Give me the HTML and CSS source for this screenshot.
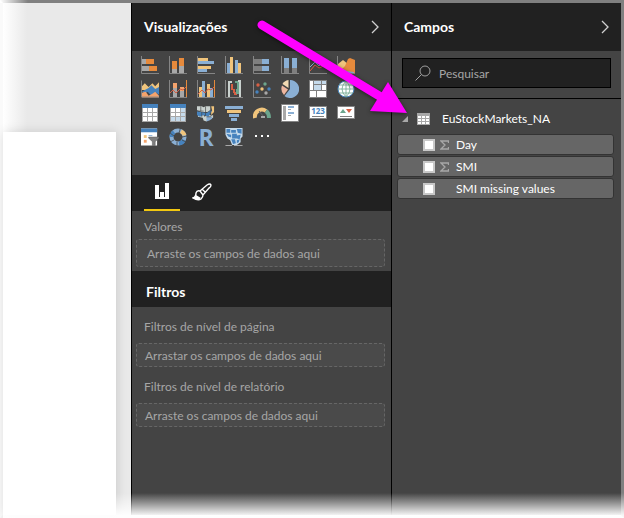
FILE: index.html
```html
<!DOCTYPE html>
<html lang="pt">
<head>
<meta charset="utf-8">
<meta name="viewport" content="width=device-width, initial-scale=1">
<title>Visualizações e Campos</title>
<link rel="stylesheet" href="styles.css">
</head>
<body>
<div class="app">
  <main class="canvas"><div class="sheet"></div></main>

  <section class="panel visuals" aria-labelledby="visuals-title">
    <header class="panel-head">
      <h2 id="visuals-title">Visualizações</h2>
      <button class="chevron" type="button" aria-label="Recolher visualizações"><svg width="8" height="14" viewBox="0 0 8 14"><path d="M1 1l6 6-6 6"/></svg></button>
    </header>

    <div class="gallery">
      <button type="button" aria-label="Barras empilhadas"><svg viewBox="0 0 18 18"><path class="axis" d="M.5 0v17.5H18"/><path class="grey" d="M1 3h4v5H1zM1 10h7v5H1z"/><path class="orange" d="M5 3h8v5H5zM8 10h8v5H8z"/></svg></button>
      <button type="button" aria-label="Colunas empilhadas"><svg viewBox="0 0 18 18"><path class="axis" d="M.5 0v17.5H18"/><path class="orange" d="M3 5h5v8H3zM10 2h5v8h-5z"/><path class="grey" d="M3 13h5v4H3zM10 10h5v7h-5z"/></svg></button>
      <button type="button" aria-label="Barras agrupadas"><svg viewBox="0 0 18 18"><path class="axis" d="M.5 0v17.5H18"/><path class="yellow" d="M1 2h10v3H1zM1 10h13v3H1z"/><path class="blue" d="M1 5h16v3H1zM1 13h9v3H1z"/></svg></button>
      <button type="button" aria-label="Colunas agrupadas"><svg viewBox="0 0 18 18"><path class="axis" d="M.5 0v17.5H18"/><path class="blue" d="M2 7h3v10H2zM10 4h3v13h-3z"/><path class="yellow" d="M5 1h3v16H5zM13 7h3v10h-3z"/></svg></button>
      <button type="button" aria-label="Barras 100% empilhadas"><svg viewBox="0 0 18 18"><path class="axis" d="M.5 0v17.5H18"/><path class="dim" d="M1 3h8v5H1zM1 10h8v5H1z"/><path class="blue" d="M9 3h7v5H9zM9 10h7v5H9z"/></svg></button>
      <button type="button" aria-label="Colunas 100% empilhadas"><svg viewBox="0 0 18 18"><path class="axis" d="M.5 0v17.5H18"/><path class="blue" d="M3 2h5v10H3zM11 2h5v10h-5z"/><path class="dim" d="M3 12h5v5H3zM11 12h5v5h-5z"/></svg></button>
      <button type="button" aria-label="Linhas"><svg viewBox="0 0 18 18"><path class="axis" d="M.5 0v17.5H18"/><path class="line-blue" d="M1 11l5-5 4 4 7-7"/><path class="line-red" d="M1 15l5-6 4 3 7-3"/></svg></button>
      <button type="button" aria-label="Área"><svg viewBox="0 0 18 18"><path class="yellow" d="M1 8l5-4 5 4 3 3v6H1z"/><path class="orange" d="M4 14l4-4 3-7 2-1 5 2v13H4z"/><path class="blue" d="M1 15l5-2 4 2 7 1v2H1z"/><path class="axis" d="M.5 0v17.5H18"/></svg></button>

      <button type="button" aria-label="Área empilhada"><svg viewBox="0 0 19 18"><path class="yellow" d="M1 6l3-3 4 4 4-4 3 3 4-4v8H1z"/><path class="deep" d="M1 12l3-2 4-2 3-3 4 4 4-2v8l-3-2-5 3-4-4-3 2-3-2z"/><path class="salmon" d="M1 13l4-1 3 4 4-2 3-2 4 4v2H1z"/><path class="axis" d="M.5 0v17.5H19"/></svg></button>
      <button type="button" aria-label="Linhas e colunas empilhadas"><svg viewBox="0 0 18 18"><path class="axis" d="M.5 0v17.5H18"/><path class="salmon" d="M4 3h4v5H4zM11 7h4v5h-4z"/><path class="grey" d="M4 8h4v9H4zM11 11h4v6h-4z"/><path class="line-orange" d="M17.5 0v17"/><path class="line-red" d="M1 13l3-3 3 3 4-4 3 1 3-3"/></svg></button>
      <button type="button" aria-label="Linhas e colunas agrupadas"><svg viewBox="0 0 18 18"><path class="axis" d="M.5 0v17.5H18"/><path class="yellow" d="M2 7h3v10H2zM10 4h3v13h-3z"/><path class="blue" d="M5 1h3v16H5zM13 8h3v9h-3z"/><path class="line-orange" d="M17.5 0v17"/><path class="line-red" d="M1 14l4-4 3 3 3-4 3 1 3-3"/></svg></button>
      <button type="button" aria-label="Cascata"><svg viewBox="0 0 18 18"><path class="axis" d="M.5 0v17.5H18"/><path class="pale" d="M3 1h4v2H5v14H3z"/><path class="red" d="M6 4h2v5h2v4H8v-3H6zM9 12h3v3H9z"/><path class="green" d="M10 1h4v13h-3V9h1V3h-2z"/><path class="pale" d="M13 0h3v17h-2V2h-1z"/></svg></button>
      <button type="button" aria-label="Dispersão"><svg viewBox="0 0 18 18"><path class="axis" d="M.5 0v17.5H18"/><circle class="red" cx="5" cy="5" r="1.7"/><circle class="green" cx="12" cy="4" r="1.7"/><circle class="yellow" cx="9" cy="9" r="1.7"/><circle class="deep" cx="4" cy="12" r="1.7"/><circle class="deep" cx="16" cy="9" r="1.7"/><circle class="grey" cx="13" cy="13" r="1.7"/></svg></button>
      <button type="button" aria-label="Pizza"><svg viewBox="0 0 18 18"><path class="blue" d="M9 0a9 9 0 1 1-5.5 16L9 9z"/><path class="cream" d="M7.5 0v8L1.5 4Q3 .8 7.5 0z"/><path class="pink" d="M1 5.500l6 4-4 5.500Q-1 11 1 5.500z"/></svg></button>
      <button type="button" aria-label="Mapa de árvore"><svg viewBox="0 0 18 18"><path class="dim" d="M0 0h18v18H0z"/><path class="white" d="M1 1h3v9H1zM1 11h6v6H1zM8 11h9v6H8zM13 5h4v5h-4z"/><path class="ice" d="M5 1h7v3H5zM5 5h7v5H5zM13 1h4v3h-4z"/></svg></button>
      <button type="button" aria-label="Mapa"><svg viewBox="0 0 18 18"><circle class="globe" cx="9" cy="9" r="8"/><path class="globe-lines" d="M1 9h16M2 5h14M2 13h14M9 1v16M9 1q-8 8 0 16M9 1q8 8 0 16"/></svg></button>

      <button type="button" aria-label="Tabela"><svg viewBox="0 0 18 18"><path class="grey" d="M1 0h16v18H1z"/><path class="deep" d="M1 0h16v4H1z"/><path class="white" d="M2 4h4v4H2zM7 4h4v4H7zM12 4h4v4h-4zM2 9h4v3H2zM7 9h4v3H7zM12 9h4v3h-4zM2 13h4v4H2zM7 13h4v4H7zM12 13h4v4h-4z"/></svg></button>
      <button type="button" aria-label="Matriz"><svg viewBox="0 0 18 18"><path class="grey" d="M1 0h16v18H1z"/><path class="deep" d="M1 0h16v4H1z"/><path class="white" d="M2 4h4v4H2zM7 4h4v4H7zM2 9h4v3H2zM7 9h4v3H7z"/><path class="ice" d="M12 4h4v4h-4zM12 9h4v3h-4zM2 13h4v4H2zM7 13h4v4H7zM12 13h4v4h-4z"/></svg></button>
      <button type="button" aria-label="Mapa preenchido"><svg viewBox="0 0 19 18"><path class="pale" d="M0 2h5l2 1 2-1h5v4l-3 2H5L0 6zM1 11l5-1 2 3 4-3 3 2 2-1v3l-5 1-2 3-3-1-1-3-5-1z"/><path class="deep" d="M0 7l4 1 6 1 2-1 2-2 2 1-4 6-5-2-4 2-3-2z"/><path class="yellow" d="M15 2h3v6l-3 3V8l1-1z"/><path class="blue" d="M10 13h6v2l-3 2-3 1z"/><path class="map-lines" d="M4 2v5M9 2v10M5 8v5M0 7h7M10 13h5M14 6v5"/></svg></button>
      <button type="button" aria-label="Funil"><svg viewBox="0 0 18 18"><path class="blue" d="M0 2h18v3H0zM4 10h10v3H4zM6 14h6v3H6z"/><path class="yellow" d="M2 6h14v3H2z"/></svg></button>
      <button type="button" aria-label="Medidor"><svg viewBox="0 0 18 18"><path class="gauge-warm" d="M2 14a7 7 0 0 1 11-7"/><path class="gauge-green" d="M13 7q3 2 3 7"/><path class="gauge-needle" d="M6 7l5 6"/><path class="grey" d="M8 12h4v2H8z"/></svg></button>
      <button type="button" aria-label="Cartão de várias linhas"><svg viewBox="0 0 18 18"><path class="doc" d="M.5.500h17v17H.5z"/><path class="grey" d="M2 2h3v14H2zM7 5h3v1H7zM7 11h3v1H7z"/><path class="blue" d="M7 2h6v2H7zM7 8h6v2H7z"/></svg></button>
      <button type="button" aria-label="Cartão"><svg viewBox="0 0 18 18"><path class="doc" d="M.5 2.500h17v12H.5z"/><text class="card-number" x="9" y="10" text-anchor="middle">123</text><path class="dim" d="M3 12h12v1H3z"/></svg></button>
      <button type="button" aria-label="KPI"><svg viewBox="0 0 18 18"><path class="doc" d="M.5 2.500h17v12H.5z"/><path class="green" d="M3 9l3-4 3 4z"/><path class="red" d="M9 5h6l-3 4z"/><path class="dim" d="M3 12h12v1H3z"/></svg></button>

      <button type="button" aria-label="Segmentação de dados"><svg viewBox="0 0 19 18"><path class="white" d="M0 0h17v18H0z"/><path class="deep" d="M0 0h17v4H0z"/><path class="yellow" d="M3 7h3v3H3z"/><path class="salmon" d="M3 12h3v3H3z"/><path class="blue" d="M8 7h4v1H8z"/><path class="funnel" d="M8 9h11v1l-4 4v4h-3v-4l-4-4z"/></svg></button>
      <button type="button" aria-label="Rosca"><svg viewBox="0 0 18 18"><circle class="ring" cx="9" cy="9" r="6.500"/><path class="ring-dark" d="M15 12a6.500 6.500 0 0 1-5 3.500M2.500 9A6.500 6.500 0 0 1 5 4"/><path class="ring-yellow" d="M12 3.300q3 1.700 3.500 4"/><path class="ring-gap" d="M11.500 0L10 5M18 8l-5 1M17 14l-4-2M8 18v-4M1 14l4-2M1 5l4 3"/></svg></button>
      <button type="button" aria-label="Visual do script R"><span class="script-r">R</span></button>
      <button type="button" aria-label="Mapa de formas"><svg viewBox="0 0 18 19"><path class="ice" d="M0 0h18v9l-2 2v4l-4 3H7l-2-5-3-2-2-4z"/><path class="deep" d="M1 1h4v4H1zM6 2h5v3H6zM12 1h5v5l-4-1zM1 6l5 1v3L3 9zM7 6h5v5H7zM12 8l4-1-1 5-3-1zM6 12h4l1 4-3 1zM12 13l3-1-1 3-2 1z"/><path class="grey" d="M0 18h7v1H0zM9 18h9v1H9z"/></svg></button>
      <button type="button" aria-label="Mais opções"><svg viewBox="0 0 18 18"><path class="white" d="M2 7h2v2H2zM8 7h2v2H8zM14 7h2v2h-2z"/></svg></button>
    </div>

    <nav class="tabs">
      <button class="tab active" type="button" aria-label="Campos"><svg width="16" height="18" viewBox="0 0 16 18"><path class="white" d="M1 2h4v10h1V9h4v3h1V0h4v16H1z"/><path class="tab-cut" d="M5 0h1v14H5zM10 0h1v14h-1z"/></svg></button>
      <button class="tab" type="button" aria-label="Formato"><svg width="20" height="18" viewBox="0 0 20 18"><path class="brush" d="M8 8l7-6q3-2 4 0 0 2-2 3l-6 7zM8 8l3 4M10 6l3 3M8 8q-3-1-4 2 0 4-3 5 5 3 8 1 2-2 2-4"/><path class="white" d="M1 15q3-1 3-3l5 3q-3 3-8 0z"/></svg></button>
    </nav>

    <div class="well values">
      <h3>Valores</h3>
      <div class="drop">Arraste os campos de dados aqui</div>
    </div>

    <h2 class="filters-title">Filtros</h2>
    <div class="well filter">
      <h3>Filtros de nível de página</h3>
      <div class="drop">Arrastar os campos de dados aqui</div>
    </div>
    <div class="well filter">
      <h3>Filtros de nível de relatório</h3>
      <div class="drop">Arraste os campos de dados aqui</div>
    </div>
  </section>

  <section class="panel fields" aria-labelledby="fields-title">
    <header class="panel-head">
      <h2 id="fields-title">Campos</h2>
      <button class="chevron" type="button" aria-label="Recolher campos"><svg width="8" height="14" viewBox="0 0 8 14"><path d="M1 1l6 6-6 6"/></svg></button>
    </header>
    <div class="search-area">
      <label class="search">
        <svg width="16" height="16" viewBox="0 0 16 16"><circle cx="10" cy="6" r="5"/><path d="M6.500 9.500L.5 15.500"/></svg>
        <input type="search" placeholder="Pesquisar" aria-label="Pesquisar">
      </label>
    </div>
    <button class="table-row" type="button" aria-expanded="true">
      <svg width="6" height="6" viewBox="0 0 6 6"><path class="grey" d="M6 0v6H0z"/></svg>
      <svg class="table-icon" width="13" height="12" viewBox="0 0 13 12"><path class="grey" d="M0 0h13v12H0z"/><path class="cells" d="M1 3h3v2H1zM5 3h3v2H5zM9 3h3v2H9zM1 6h3v2H1zM5 6h3v2H5zM9 6h3v2H9zM1 9h3v2H1zM5 9h3v2H5zM9 9h3v2H9z"/></svg>
      <span>EuStockMarkets_NA</span>
    </button>
    <div class="field-list">
      <label class="field"><input type="checkbox"><svg class="sigma" viewBox="0 0 9 10"><path d="M8.500 3V1H1l4 4-4 4h7.500V7"/></svg><span>Day</span></label>
      <label class="field"><input type="checkbox"><svg class="sigma" viewBox="0 0 9 10"><path d="M8.500 3V1H1l4 4-4 4h7.500V7"/></svg><span>SMI</span></label>
      <label class="field"><input type="checkbox"><span class="sigma"></span><span>SMI missing values</span></label>
    </div>
  </section>

  <svg class="arrow" width="160" height="106" viewBox="0 0 160 106" aria-hidden="true"><path class="arrow-line" d="M11 10l119 72"/><path class="arrow-head" d="M156 98l-37-2 18-29z"/></svg>
</div>
</body>
</html>
```
FILE: styles.css
```css
* { box-sizing: border-box; }

body {
  margin: 0;
  background: #fff;
  color: #fff;
  font-family: Lato, "Open Sans", sans-serif;
  font-size: 12px;
  line-height: 16px;
}

h2, h3 { margin: 0; }

button {
  margin: 0;
  padding: 0;
  border: 0;
  background: none;
  color: inherit;
  font: inherit;
}

svg { display: block; fill: none; }

.app {
  position: relative;
  display: flex;
  min-height: 100vh;
  border: 3px solid #808080;
  border-left-color: #fafafa;
  border-bottom-color: #f3f3f3;
}

.app::before {
  content: "";
  position: absolute;
  top: -3px;
  left: -3px;
  width: 28px;
  height: 3px;
  background: linear-gradient(90deg, #fff, #fff0);
}

.app::after {
  content: "";
  position: absolute;
  right: -3px;
  bottom: -3px;
  left: 0;
  height: 25px;
  background: linear-gradient(#fff0, #fffe 22px);
  pointer-events: none;
}

.canvas {
  flex: 1;
  display: flex;
  padding: 129px 15px 0 0;
  background: linear-gradient(90deg, #fff, #e9e9e9 24px);
}

.sheet {
  flex: 1;
  background: #fff;
  box-shadow: 1px 0 10px #0002;
}

.panel {
  min-width: 0;
  border-left: 1px solid #000;
  background: #444;
}

.visuals { flex: 0 0 260px; }
.fields { flex: 0 0 230px; }

.panel-head {
  display: flex;
  align-items: center;
  justify-content: space-between;
  height: 48px;
  padding: 0 12px;
  background: #212121;
}

.panel-head h2, .filters-title {
  font-size: 14px;
  line-height: 20px;
  font-weight: 700;
}

.chevron path { stroke: #d0d0d0; stroke-width: 1.3; }

.gallery {
  display: grid;
  grid-template-columns: repeat(8, 18px);
  grid-auto-rows: 18px;
  gap: 6px 10px;
  height: 124px;
  padding: 5px 9px;
}

.gallery svg { width: 18px; height: 18px; }

.axis { stroke: #858585; }
.grey { fill: #a8a8a8; }
.dim { fill: #7f7f7f; }
.orange { fill: #e68a3c; }
.yellow { fill: #f0c47c; }
.blue { fill: #8aafd4; }
.deep { fill: #4682bd; }
.salmon { fill: #f4a36c; }
.red { fill: #d65f43; }
.green { fill: #6ca58d; }
.cream { fill: #f2dab3; }
.pink { fill: #eeb69f; }
.ice { fill: #c5daeb; }
.pale { fill: #c9d1ce; }
.white { fill: #fff; }
.line-blue { stroke: #8aafd4; }
.line-red { stroke: #d65f43; }
.line-orange { stroke: #e68a3c; }
.doc { fill: #fff; stroke: #858585; }
.globe { fill: #fff; stroke: #4682bd; }
.globe-lines { stroke: #6ca58d; stroke-width: .8; }
.map-lines { stroke: #444; stroke-width: .7; }
.gauge-warm { stroke: #f0c47c; stroke-width: 4; }
.gauge-green { stroke: #6ca58d; stroke-width: 4; }
.gauge-needle { stroke: #666; }
.funnel { fill: #7f7f7f; stroke: #555; stroke-width: .5; }
.ring { stroke: #8aafd4; stroke-width: 4; }
.ring-dark { stroke: #4682bd; stroke-width: 4; }
.ring-yellow { stroke: #f0c47c; stroke-width: 4; }
.ring-gap { stroke: #444; stroke-width: .8; }

.card-number {
  fill: #4682bd;
  font-family: "Open Sans", sans-serif;
  font-size: 8px;
  font-weight: 700;
}

.script-r {
  display: block;
  color: #8aafd4;
  font-family: "Open Sans", sans-serif;
  font-size: 23px;
  line-height: 18px;
  font-weight: 700;
}

.tabs {
  display: flex;
  gap: 4px;
  height: 36px;
  padding: 0 12px;
  background: #212121;
}

.tab {
  display: grid;
  place-items: center;
  width: 36px;
  border-bottom: 2px solid transparent;
}

.tab.active { border-color: #f2c811; }
.tab-cut { fill: #212121; }
.brush { stroke: #fff; stroke-width: 1.4; }

.well { padding: 8px 6px 0 4px; }
.well h3 {
  padding: 0 8px;
  color: #a6a6a6;
  font-size: 12px;
  line-height: 16px;
  font-weight: 400;
}

.drop {
  display: flex;
  align-items: center;
  height: 24px;
  margin-top: 8px;
  padding: 2px 8px 0;
  border: 1px dashed #666;
  border-radius: 3px;
  background: #4a4a4a;
  color: #a6a6a6;
}

.values { padding-bottom: 4px; }
.values .drop { height: 28px; margin-top: 4px; padding: 2px 10px 0; }

.filters-title {
  padding: 11px 14px 5px;
  background: #212121;
}

.filter { padding-top: 12px; }

.search-area {
  padding: 7px 10px 10px;
  border-bottom: 1px solid #000;
}

.search {
  display: flex;
  align-items: center;
  gap: 8px;
  height: 30px;
  padding: 0 12px;
  border: 1px solid #000;
  background: #212121;
}

.search svg { flex: none; stroke: #a0a0a0; }

.search input {
  flex: 1;
  min-width: 0;
  padding: 1px 0 0;
  border: 0;
  outline: 0;
  background: none;
  color: #fff;
  font: inherit;
}

.search input::placeholder { color: #a6a6a6; opacity: 1; }

.table-row {
  display: flex;
  align-items: center;
  width: 100%;
  height: 35px;
  padding: 4px 10px 0;
}

.table-icon { margin: 0 12px 0 9px; }
.cells { fill: #fff; }

.field-list {
  display: grid;
  gap: 1px;
  padding: 0 7px 0 5px;
}

.field {
  display: flex;
  align-items: center;
  height: 21px;
  padding: 0 25px;
  border: 1px solid #333;
  border-radius: 3px;
  background: #666;
}

.field input {
  appearance: none;
  width: 12px;
  height: 12px;
  margin: 0;
  border: 2px solid #c8c8c8;
  background: #fff;
}

.field input:checked { background: #f2c811; }

.sigma {
  width: 9px;
  height: 10px;
  margin: 0 7px 0 5px;
  stroke: #a8a8a8;
  stroke-width: 1.3;
}

.arrow {
  position: absolute;
  top: 12px;
  right: 210px;
  filter: drop-shadow(0 1px 2px #0008);
  pointer-events: none;
}

.arrow-line { stroke: #f0f; stroke-width: 9; stroke-linecap: round; }
.arrow-head { fill: #f0f; }
```
